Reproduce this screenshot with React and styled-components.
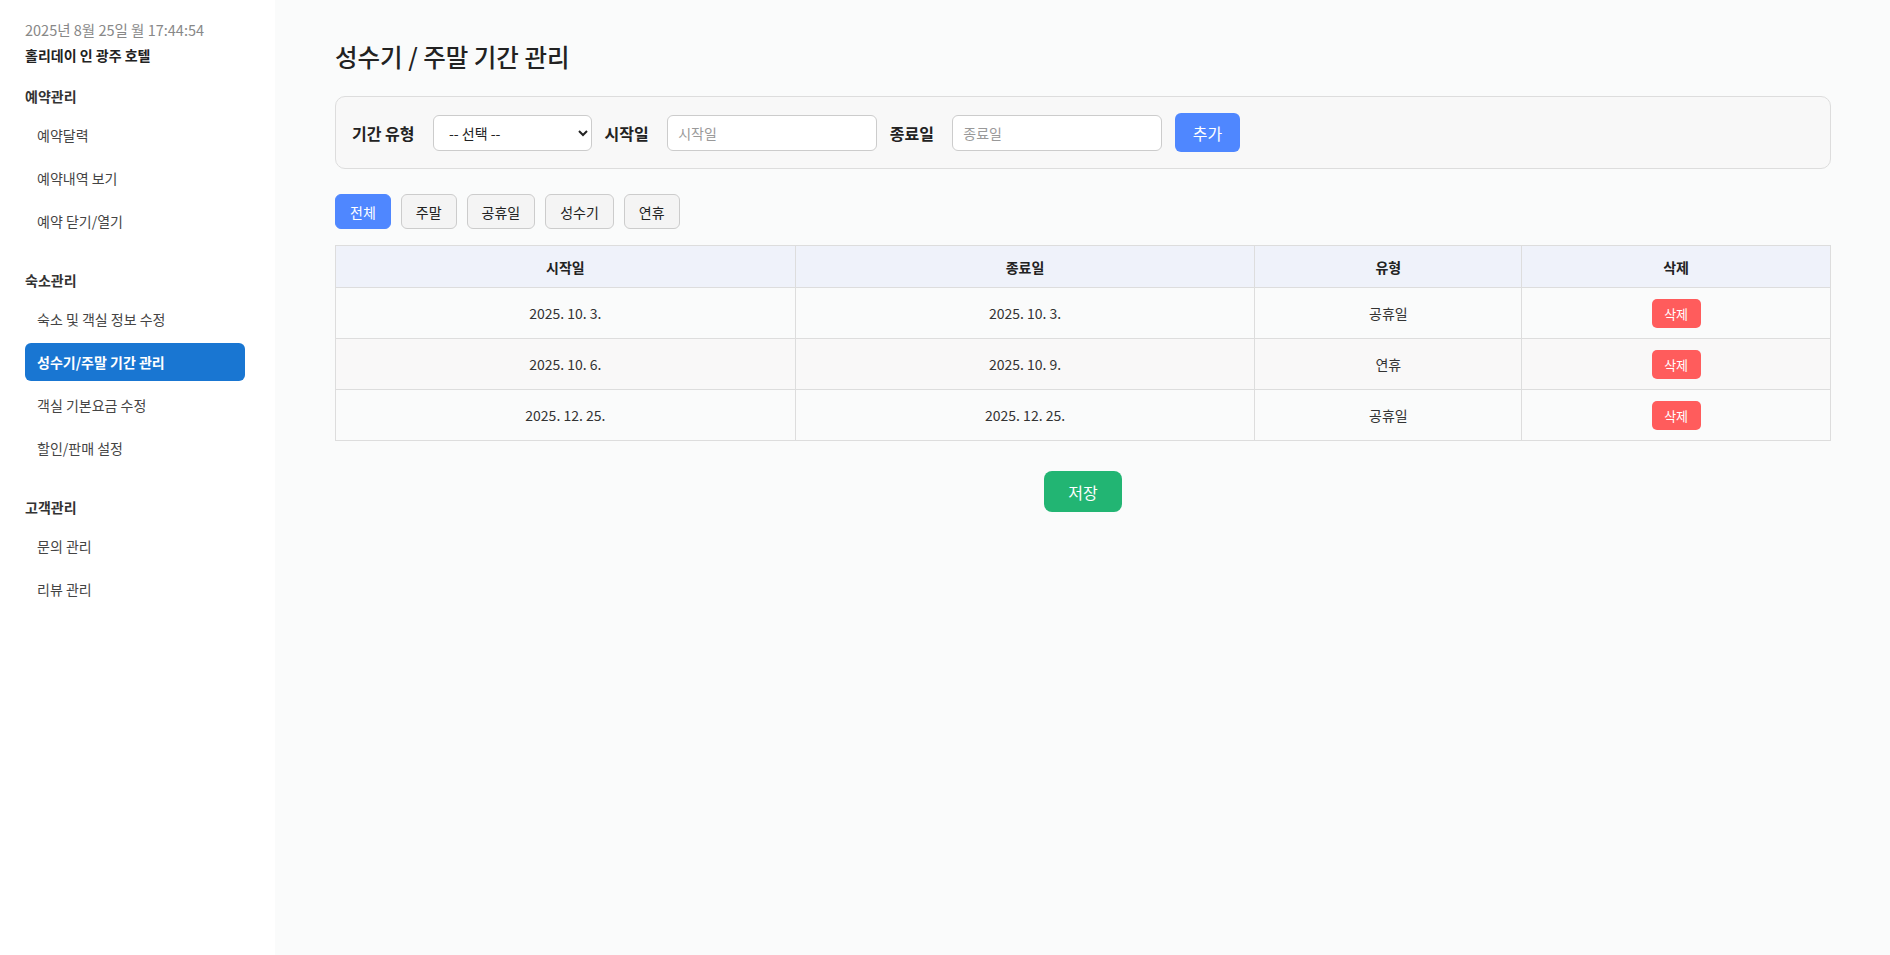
import React, { useState } from 'react'
import styled, { createGlobalStyle } from 'styled-components';

const GlobalStyle = createGlobalStyle`
  * { box-sizing: border-box; }
  body {
    margin: 0;
    font-family: "Noto Sans CJK KR", "Noto Sans", sans-serif;
    color: #222;
    background: #fafbfb;
  }
`;

const menu = [
  {
    title: '예약관리',
    items: ['예약달력', '예약내역 보기', '예약 닫기/열기'],
  },
  {
    title: '숙소관리',
    items: ['숙소 및 객실 정보 수정', '성수기/주말 기간 관리', '객실 기본요금 수정', '할인/판매 설정'],
  },
  {
    title: '고객관리',
    items: ['문의 관리', '리뷰 관리'],
  },
];

const tabs = ['전체', '주말', '공휴일', '성수기', '연휴'];

const periods = [
  { start: '2025. 10. 3.', end: '2025. 10. 3.', type: '공휴일' },
  { start: '2025. 10. 6.', end: '2025. 10. 9.', type: '연휴' },
  { start: '2025. 12. 25.', end: '2025. 12. 25.', type: '공휴일' },
];

export default function App() {
  const [tab, setTab] = useState('전체');
  const active = '성수기/주말 기간 관리';

  return (
    <>
      <GlobalStyle />
      <Layout>
        <Sidebar>
          <Clock>2025년 8월 25일 월 17:44:54</Clock>
          <Hotel>홀리데이 인 광주 호텔</Hotel>
          {menu.map((section) => (
            <Section key={section.title}>
              <SectionTitle>{section.title}</SectionTitle>
              {section.items.map((item) => (
                <MenuItem key={item} $active={item === active}>{item}</MenuItem>
              ))}
            </Section>
          ))}
        </Sidebar>

        <Main>
          <Title>성수기 / 주말 기간 관리</Title>

          <FilterBox>
            <Label>기간 유형</Label>
            <Select defaultValue="">
              <option value="">-- 선택 --</option>
              <option value="weekend">주말</option>
              <option value="holiday">공휴일</option>
              <option value="peak">성수기</option>
              <option value="long">연휴</option>
            </Select>
            <Label>시작일</Label>
            <Input placeholder="시작일" />
            <Label>종료일</Label>
            <Input placeholder="종료일" />
            <AddButton>추가</AddButton>
          </FilterBox>

          <Tabs>
            {tabs.map((t) => (
              <Tab key={t} $active={tab === t} onClick={() => setTab(t)}>{t}</Tab>
            ))}
          </Tabs>

          <Table>
            <colgroup>
              <col style={{ width: '30.75%' }} />
              <col style={{ width: '30.75%' }} />
              <col style={{ width: '17.85%' }} />
              <col style={{ width: '20.65%' }} />
            </colgroup>
            <thead>
              <tr>
                <Th>시작일</Th>
                <Th>종료일</Th>
                <Th>유형</Th>
                <Th>삭제</Th>
              </tr>
            </thead>
            <tbody>
              {periods.map((p, i) => (
                <Row key={i}>
                  <Td>{p.start}</Td>
                  <Td>{p.end}</Td>
                  <Td>{p.type}</Td>
                  <Td><DeleteButton>삭제</DeleteButton></Td>
                </Row>
              ))}
            </tbody>
          </Table>

          <SaveRow>
            <SaveButton>저장</SaveButton>
          </SaveRow>
        </Main>
      </Layout>
    </>
  );
}

const Layout = styled.div`
  display: flex;
  min-height: 100vh;
`;

const Sidebar = styled.aside`
  width: 275px;
  flex-shrink: 0;
  background: #fff;
  padding: 20px 30px 20px 25px;
`;

const Clock = styled.div`
  font-size: 14.5px;
  line-height: 20px;
  color: #888;
  margin-bottom: 4px;
`;

const Hotel = styled.div`
  font-size: 14px;
  line-height: 22px;
  font-weight: 700;
  color: #222;
  margin-bottom: -5px;
`;

const Section = styled.div`
  display: flex;
  flex-direction: column;
  margin-top: 24px;
`;

const SectionTitle = styled.div`
  font-size: 14px;
  line-height: 22px;
  font-weight: 700;
  color: #333;
  margin-bottom: 9px;
`;

const MenuItem = styled.div`
  height: 38px;
  display: flex;
  align-items: center;
  padding-left: 12px;
  margin-bottom: 5px;
  border-radius: 6px;
  font-size: 14px;
  color: ${(p) => (p.$active ? '#fff' : '#444')};
  font-weight: ${(p) => (p.$active ? 700 : 400)};
  background: ${(p) => (p.$active ? '#1976d2' : 'transparent')};
  cursor: pointer;
`;

const Main = styled.main`
  flex: 1;
  padding: 40px 59px 40px 60px;
  background: #fafbfb;
`;

const Title = styled.h2`
  margin: 0 0 22px;
  font-size: 24.5px;
  line-height: 34px;
  font-weight: 500;
  color: #222;
`;

const FilterBox = styled.div`
  display: flex;
  align-items: center;
  gap: 12.5px;
  padding: 16px;
  background: #f8f8f8;
  border: 1px solid #ddd;
  border-radius: 10px;
`;

const Label = styled.label`
  font-size: 16px;
  font-weight: 700;
  color: #222;
  margin-right: 6px;
`;

const Select = styled.select`
  width: 159px;
  height: 36px;
  padding: 0 11px;
  font-family: inherit;
  font-size: 14px;
  color: #222;
  background: #fff;
  border: 1px solid #ccc;
  border-radius: 6px;
`;

const Input = styled.input`
  width: 210px;
  height: 36px;
  padding: 0 10px;
  font-family: inherit;
  font-size: 14px;
  background: #fff;
  border: 1px solid #ccc;
  border-radius: 6px;
  &::placeholder { color: #999; }
`;

const AddButton = styled.button`
  height: 39px;
  padding: 0 18px;
  font-family: inherit;
  font-size: 16px;
  color: #fff;
  background: #4f87ff;
  border: none;
  border-radius: 6px;
  cursor: pointer;
`;

const Tabs = styled.div`
  display: flex;
  gap: 10px;
  margin: 25px 0 16px;
`;

const Tab = styled.button`
  height: 35px;
  padding: 0 14px;
  font-family: inherit;
  font-size: 14px;
  color: ${(p) => (p.$active ? '#fff' : '#222')};
  background: ${(p) => (p.$active ? '#4f87ff' : '#f4f4f4')};
  border: 1px solid ${(p) => (p.$active ? '#4f87ff' : '#ccc')};
  border-radius: 6px;
  cursor: pointer;
`;

const Table = styled.table`
  width: 100%;
  border-collapse: collapse;
  table-layout: fixed;
  font-size: 14px;
`;

const Th = styled.th`
  height: 42px;
  padding: 0 8px;
  background: #eff2fa;
  border: 1px solid #ddd;
  font-weight: 700;
  color: #222;
  text-align: center;
`;

const Row = styled.tr`
  &:nth-child(even) { background: #f9f8f8; }
`;

const Td = styled.td`
  height: 51px;
  padding: 0 8px;
  border: 1px solid #ddd;
  text-align: center;
  color: #333;
`;

const DeleteButton = styled.button`
  height: 29px;
  padding: 0 12.5px;
  font-family: inherit;
  font-size: 13px;
  color: #fff;
  background: #ff5c5c;
  border: none;
  border-radius: 5px;
  cursor: pointer;
`;

const SaveRow = styled.div`
  display: flex;
  justify-content: center;
  margin-top: 30px;
`;

const SaveButton = styled.button`
  width: 78px;
  height: 41px;
  font-family: inherit;
  font-size: 16px;
  color: #fff;
  background: #22b573;
  border: none;
  border-radius: 8px;
  cursor: pointer;
`;
